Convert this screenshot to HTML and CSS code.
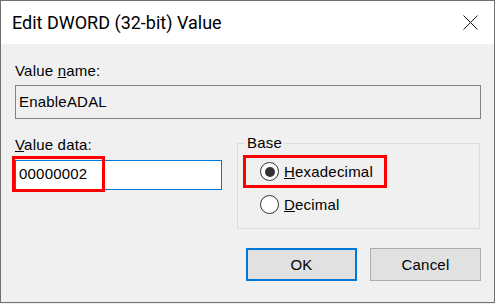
FILE: index.html
```html
<!DOCTYPE html>
<html>
  <head>
    <meta charset="utf-8" />
    <link rel="stylesheet" href="styles.css">
  </head>
  <body>
    <div class="window">
      <div class="titlebar">
        <div class="title">Edit DWORD (32-bit) Value</div>
        <svg class="close" width="15" height="15" viewBox="0 0 15 15">
          <path d="M0.5 0.5 L14.5 14.5 M14.5 0.5 L0.5 14.5" />
        </svg>
      </div>

      <div class="content">
        <div class="label">Value <u>n</u>ame:</div>
        <div class="field readonly">EnableADAL</div>

        <div class="columns">
          <div class="data-col">
            <div class="label"><u>V</u>alue data:</div>
            <div class="field-wrap">
              <div class="field active">00000002</div>
              <div class="mark"></div>
            </div>
          </div>

          <fieldset class="base">
            <legend>Base</legend>
            <div class="radio-row marked">
              <span class="radio checked"></span>
              <span><u>H</u>exadecimal</span>
            </div>
            <div class="radio-row">
              <span class="radio"></span>
              <span><u>D</u>ecimal</span>
            </div>
          </fieldset>
        </div>

        <div class="buttons">
          <button class="button default">OK</button>
          <button class="button">Cancel</button>
        </div>
      </div>
    </div>
  </body>
</html>
```

FILE: styles.css
```css
body {
  margin: 0;
  background: #f0f0f0;
  font-family: 'Liberation Sans', Arial, sans-serif;
  font-size: 15px;
  color: #000;
}

.window {
  width: 495px;
  height: 303px;
  box-sizing: border-box;
  border: 1px solid #707070;
  background: #f0f0f0;
  display: flex;
  flex-direction: column;
}

.titlebar {
  height: 43px;
  background: #fff;
  display: flex;
  align-items: center;
  justify-content: space-between;
  padding: 0 16px 0 11px;
}

.title {
  font-family: Roboto, 'Noto Sans', sans-serif;
  font-size: 18px;
  color: #000;
}

.close path {
  stroke: #111;
  stroke-width: 1;
  fill: none;
}

.content {
  padding: 18px 13px 0 14px;
}

.label {
  line-height: 18px;
  letter-spacing: 0.2px;
}

.field {
  box-sizing: border-box;
  height: 34px;
  margin-top: 5px;
  padding: 0 3px;
  line-height: 32px;
  border: 1px solid #828282;
  letter-spacing: 0.2px;
}

.field.readonly {
  background: #f0f0f0;
}

.columns {
  display: grid;
  grid-template-columns: 207px 243px;
  column-gap: 15px;
  align-items: start;
  margin-top: 17px;
}

.field-wrap {
  position: relative;
  margin-top: 6px;
}

.field.active {
  height: 30px;
  margin-top: 0;
  padding: 4px 3px 6px;
  line-height: 18px;
  background: #fff;
  border-color: #0078d7;
}

/* red annotation box over the input */
.mark {
  position: absolute;
  left: -3px;
  top: -4px;
  width: 93px;
  height: 36px;
  box-sizing: border-box;
  border: 3px solid #f00;
}

.base {
  margin: -2px 0 0;
  padding: 0 0 7px 5px;
  border: 1px solid #dcdcdc;
  min-width: 0;
}

.base legend {
  padding: 0 2px;
  margin-left: 2px;
  line-height: 18px;
  letter-spacing: 0.2px;
}

.radio-row {
  box-sizing: border-box;
  height: 33px;
  width: fit-content;
  display: flex;
  align-items: center;
  gap: 5px;
  padding: 0 11px 0 14px;
  border: 3px solid transparent;
  letter-spacing: 0.2px;
}

.radio-row.marked {
  margin-top: 3px;
  border-color: #f00;
}

.radio {
  width: 19px;
  height: 19px;
  box-sizing: border-box;
  border: 1px solid #333;
  border-radius: 50%;
  background: #fff;
  display: flex;
  align-items: center;
  justify-content: center;
}

.radio.checked::after {
  content: '';
  width: 10px;
  height: 10px;
  border-radius: 50%;
  background: #333;
}

.buttons {
  display: flex;
  justify-content: flex-end;
  gap: 13px;
  margin-top: 19px;
}

.button {
  width: 111px;
  height: 33px;
  box-sizing: border-box;
  background: #e1e1e1;
  border: 1px solid #adadad;
  font-family: 'Liberation Sans', Arial, sans-serif;
  font-size: 15px;
  color: #000;
  letter-spacing: 0.2px;
  padding: 0;
}

.button.default {
  border: 2px solid #0078d7;
}
```
